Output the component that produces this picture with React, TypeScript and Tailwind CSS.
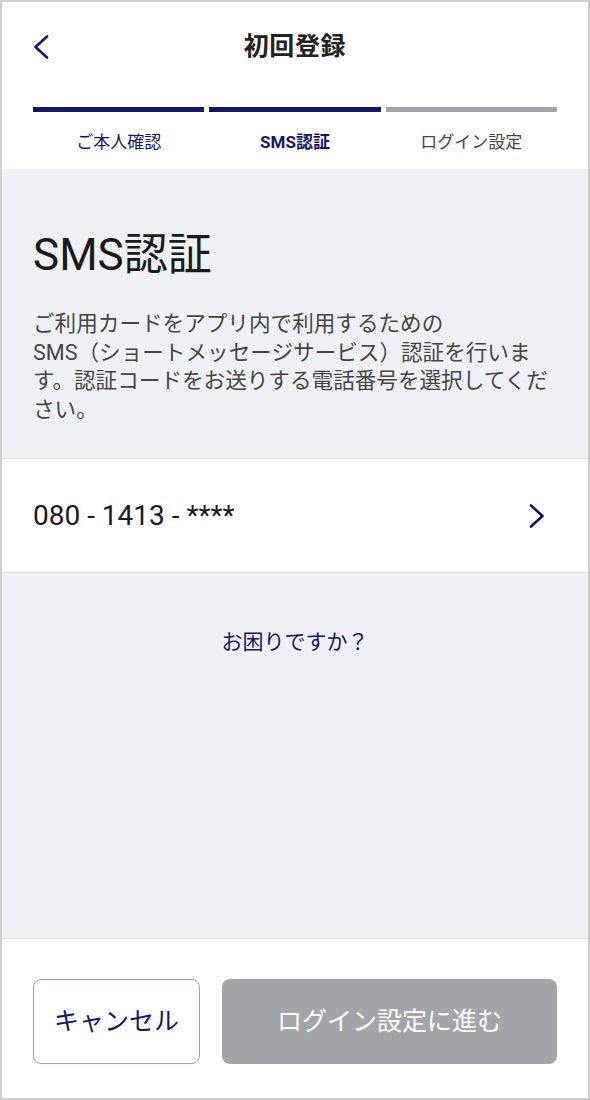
const steps = [
  { label: "ご本人確認", state: "done" },
  { label: "SMS認証", state: "current" },
  { label: "ログイン設定", state: "todo" },
];

function Chevron({ dir }: { dir: "left" | "right" }) {
  return (
    <svg width="16" height="24" viewBox="0 0 16 24" fill="none" className="text-[#13166a]">
      <path
        d={dir === "left" ? "M14 1.5 L2.5 12 L14 22.5" : "M2 1.5 L13.5 12 L2 22.5"}
        stroke="currentColor"
        strokeWidth="2.6"
        strokeLinecap="round"
        strokeLinejoin="round"
      />
    </svg>
  );
}

export default function App() {
  return (
    <div
      className="w-[590px] h-[1100px] border-2 border-[#cfcfcf] bg-[#f0f1f6] flex flex-col"
      style={{ fontFamily: 'Roboto, "Noto Sans CJK JP", sans-serif' }}
    >
      {/* ヘッダー */}
      <div className="bg-white h-[167px] flex flex-col shrink-0">
        <div className="relative h-[90px] flex items-center justify-center">
          <button className="absolute left-[31px] top-[33px]">
            <Chevron dir="left" />
          </button>
          <h1 className="text-[25px] font-bold text-[#222] tracking-wide">初回登録</h1>
        </div>

        {/* ステップ */}
        <div className="mt-[15px] px-[31px] grid grid-cols-3 gap-[5px]">
          {steps.map((s) => (
            <div key={s.label} className="flex flex-col items-center">
              <div
                className={`w-full h-[5px] ${
                  s.state === "todo" ? "bg-[#a3a4a9]" : "bg-[#13166a]"
                }`}
              />
              <span
                className={`mt-[20px] text-[17px] leading-[20px] ${
                  s.state === "current"
                    ? "font-bold text-[#13166a]"
                    : s.state === "done"
                    ? "text-[#13166a]"
                    : "text-[#444]"
                }`}
              >
                {s.label}
              </span>
            </div>
          ))}
        </div>
      </div>

      {/* 説明 */}
      <div className="px-[31px] pt-[60px] pb-[34px] shrink-0">
        <h2 className="text-[44px] leading-[52px] text-[#1a1a1a]">SMS認証</h2>
        <p className="mt-[29px] text-[21.6px] leading-[28.5px] text-[#454545]">
          ご利用カードをアプリ内で利用するための
          <br />
          SMS（ショートメッセージサービス）認証を行います。認証コードをお送りする電話番号を選択してください。
        </p>
      </div>

      {/* 電話番号 */}
      <button className="h-[115px] bg-white border-y border-[#dfe0e4] flex items-center justify-between pl-[31px] pr-[43px] shrink-0">
        <span className="text-[28px] text-[#1a1a1a]">080 - 1413 - ****</span>
        <Chevron dir="right" />
      </button>

      <div className="flex-1 flex justify-center pt-[55px]">
        <span className="text-[21px] leading-[28px] text-[#13166a] h-fit">お困りですか？</span>
      </div>

      {/* フッター */}
      <div className="h-[160px] bg-white border-t border-[#dfe0e4] flex items-start gap-[22px] px-[31px] pt-[40px] shrink-0">
        <button className="w-[167px] h-[85px] rounded-[8px] border border-[#9d9fcb] bg-white text-[25px] text-[#13166a]">
          キャンセル
        </button>
        <button className="flex-1 h-[85px] rounded-[8px] bg-[#a4a5aa] text-[25px] text-white">
          ログイン設定に進む
        </button>
      </div>
    </div>
  );
}
